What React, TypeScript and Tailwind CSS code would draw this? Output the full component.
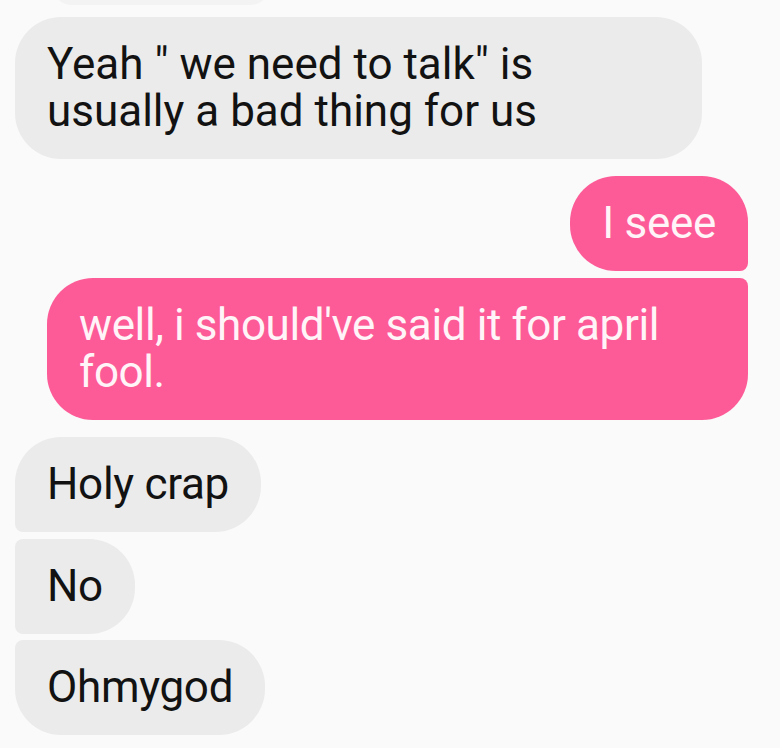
import React from 'react'

type Side = 'in' | 'out'

interface Message {
  side: Side
  text: string
  corners: string
  extra?: string
}

const messages: Message[] = [
  { side: 'in', text: 'Yeah " we need to talk" is usually a bad thing for us', corners: 'rounded-[46px]', extra: 'w-[687px] pr-[100px]' },
  { side: 'out', text: 'I seee', corners: 'rounded-[46px] rounded-br-[8px]' },
  { side: 'out', text: "well, i should've said it for april fool.", corners: 'rounded-[46px] rounded-tr-[8px]', extra: 'w-[701px] tracking-[-0.4px]' },
  { side: 'in', text: 'Holy crap', corners: 'rounded-[46px] rounded-bl-[8px]' },
  { side: 'in', text: 'No', corners: 'rounded-[46px] rounded-tl-[8px] rounded-bl-[8px]' },
  { side: 'in', text: 'Ohmygod', corners: 'rounded-[46px] rounded-tl-[8px]' },
]

function Bubble({ msg }: { msg: Message }) {
  const base = 'px-[32px] py-[24px] text-[44px] leading-[47px]'
  const tone = msg.side === 'out'
    ? 'bg-[#fd5b97] text-[#fff4f8] self-end'
    : 'bg-[#ebebeb] text-[#121212] self-start'
  return (
    <div className={`${base} ${tone} ${msg.corners} ${msg.extra ?? 'tracking-[-0.3px]'}`}>
      {msg.text}
    </div>
  )
}

export default function App() {
  const [first, seee, fool, holy, no, omg] = messages

  return (
    <div
      className="w-[780px] h-[748px] overflow-hidden bg-[#fafafa] relative"
      style={{ fontFamily: 'Roboto, "Noto Sans", sans-serif' }}
    >
      {/* tail of the previous bubble peeking in at the top */}
      <div className="absolute left-[52px] top-[-40px] w-[218px] h-[45px] rounded-b-[20px] bg-[#f3f3f3]" />

      <div className="relative flex flex-col pt-[17px] pl-[15px] pr-[32px]">
        <Bubble msg={first} />

        {/* consecutive bubbles from the same side sit ~7px apart, groups 17px */}
        <div className="flex flex-col gap-[7px] mt-[17px]">
          <Bubble msg={seee} />
          <Bubble msg={fool} />
        </div>

        <div className="flex flex-col gap-[6.5px] mt-[17px]">
          <Bubble msg={holy} />
          <Bubble msg={no} />
          <Bubble msg={omg} />
        </div>
      </div>
    </div>
  )
}
